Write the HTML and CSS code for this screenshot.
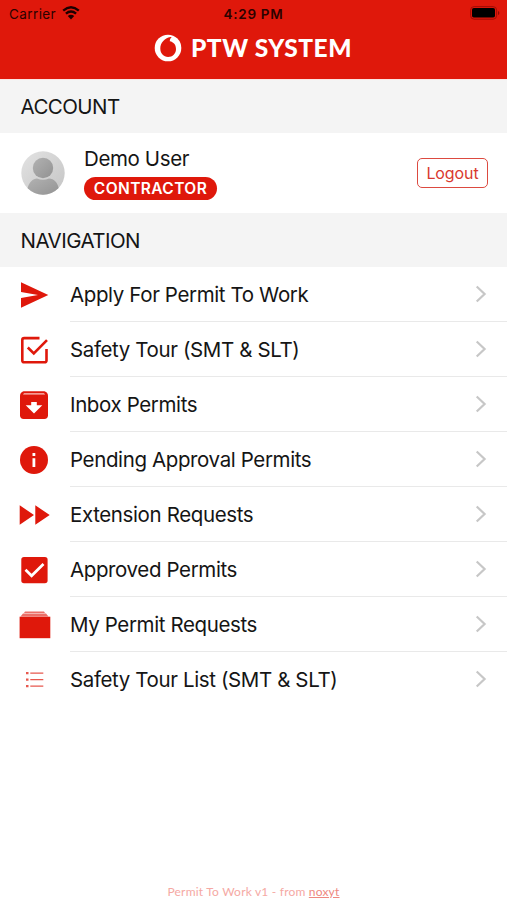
FILE: index.html
```html
<!DOCTYPE html>
<html lang="en">
<head>
<meta charset="utf-8">
<title>PTW System</title>
<link rel="stylesheet" href="styles.css">
</head>
<body>
<header class="header">
  <div class="status">
    <div class="carrier"><span>Carrier</span>
      <svg width="18" height="14" viewBox="0 0 18 14"><path d="M1.200 4.700Q9 -2 16.800 4.700M3.900 7.600Q9 3.400 14.100 7.600" fill="none" stroke="#1c0000" stroke-width="2.400"/><path d="M5.800 10Q9 7.400 12.200 10L9 13.400z" fill="#1c0000"/></svg>
    </div>
    <div class="time">4:29 PM</div>
    <svg class="battery" width="30" height="14" viewBox="0 0 30 14"><rect x=".6" y=".6" width="26" height="12.600" rx="3.500" fill="none" stroke="#a30c05"/><rect x="2" y="2" width="23" height="9.600" rx="1.800" fill="#000"/><path d="M28 5v4q1.400-.7 1.400-2T28 5z" fill="#8d0903"/></svg>
  </div>
  <div class="brand">
    <svg width="28" height="28" viewBox="0 0 28 28"><circle cx="14" cy="14" r="13.300" fill="#fff"/><path d="M16.500 3C10.300 4.200 6.300 9 6.300 14.600c0 4.900 3.300 8.400 7.800 8.400 4.500 0 7.900-3.400 7.900-8 0-4.200-2.400-7-6.200-7.700 0-1.600.5-3.100 1.900-4.200z" fill="#df180b"/></svg>
    <h1>PTW SYSTEM</h1>
  </div>
</header>
<main>
  <h2 class="section account-title"><span>ACCOUNT</span></h2>
  <section class="account">
    <svg class="avatar" width="44" height="44" viewBox="0 0 44 44"><defs><linearGradient id="bg" x2="1" y2="1"><stop stop-color="#e3e3e3"/><stop offset="1" stop-color="#c4c4c4"/></linearGradient><linearGradient id="fg" x2="1" y2="1"><stop stop-color="#b2b2b2"/><stop offset="1" stop-color="#929292"/></linearGradient><clipPath id="c"><circle cx="22" cy="22" r="21.700"/></clipPath></defs><g clip-path="url(#c)"><path fill="url(#bg)" d="M0 0h44v44H0z"/><circle cx="22" cy="17" r="10.200" fill="url(#fg)"/><path d="M6 39C8 31 12 27.500 16 27.500q6 2.400 12 0c5 0 9 4 10 11.500v6H6z" fill="url(#fg)"/></g></svg>
    <div class="user"><span class="name">Demo User</span><span class="badge"><span>CONTRACTOR</span></span></div>
    <button class="logout">Logout</button>
  </section>
  <h2 class="section nav-title"><span>NAVIGATION</span></h2>
  <nav>
    <a class="row"><svg class="icon" viewBox="0 0 34 34"><path d="M4 4.300 31.300 17 4 29.800V20l17-3L4 14z"/></svg><span class="label"><span>Apply For Permit To Work</span><svg class="chev" viewBox="0 0 12 18"><path d="M1.700 1.500 9.600 9l-7.900 7.500"/></svg></span></a>
    <a class="row"><svg class="icon line" viewBox="0 0 34 34"><path d="M22.500 5.100H7.200Q5.300 5.100 5.300 7v20.500q0 1.800 1.900 1.800h20.300q2 0 2-1.800V16"/><path d="m10.800 14.500 6 6L30 7.200"/></svg><span class="label"><span>Safety Tour (SMT &amp; SLT)</span><svg class="chev" viewBox="0 0 12 18"><path d="M1.700 1.500 9.600 9l-7.900 7.500"/></svg></span></a>
    <a class="row"><svg class="icon" viewBox="0 0 34 34"><path d="M6.500 3.300h21Q31 4.500 31 7.900v19.400q0 3.700-3.700 3.700H6.700Q3 31 3 27.300V7.900Q3 4.500 6.500 3.300z"/><path d="M7 5.200h20l1.200 1.200H6z" fill="#fbc9c5"/><path d="M14.200 14h5.600v3.200h5.500L17 25.600l-8.300-8.400h5.500z" fill="#fff"/></svg><span class="label"><span>Inbox Permits</span><svg class="chev" viewBox="0 0 12 18"><path d="M1.700 1.500 9.600 9l-7.900 7.500"/></svg></span></a>
    <a class="row"><svg class="icon" viewBox="0 0 34 34"><circle cx="17" cy="17" r="14"/><path d="M15.500 10h2.800v3h-2.800zm0 5.300h2.800V24h-2.800z" fill="#fff"/></svg><span class="label"><span>Pending Approval Permits</span><svg class="chev" viewBox="0 0 12 18"><path d="M1.700 1.500 9.600 9l-7.900 7.500"/></svg></span></a>
    <a class="row"><svg class="icon" viewBox="0 0 34 34"><path d="M2.700 7.300 17 17 2.700 26.700zm15.600 0L32.700 17l-14.400 9.700z"/></svg><span class="label"><span>Extension Requests</span><svg class="chev" viewBox="0 0 12 18"><path d="M1.700 1.500 9.600 9l-7.900 7.500"/></svg></span></a>
    <a class="row"><svg class="icon" viewBox="0 0 34 34"><rect x="4.300" y="4" width="26.300" height="26.300" rx="2.700"/><path d="m8.500 16.800 6.100 6L26.500 11" fill="none" stroke="#fff" stroke-width="2.700"/></svg><span class="label"><span>Approved Permits</span><svg class="chev" viewBox="0 0 12 18"><path d="M1.700 1.500 9.600 9l-7.900 7.500"/></svg></span></a>
    <a class="row"><svg class="icon" viewBox="0 0 34 34"><path d="M8 3.500h19l1 1.500H7zM6 5.400h23l2.500 3H3.500z" opacity=".62"/><path d="M2.600 8.700h30.700v21.500H2.600z"/></svg><span class="label"><span>My Permit Requests</span><svg class="chev" viewBox="0 0 12 18"><path d="M1.700 1.500 9.600 9l-7.900 7.500"/></svg></span></a>
    <a class="row"><svg class="icon" viewBox="0 0 34 34" opacity=".72"><path d="M13.300 9.500h13v1.300h-13zm0 6.500h13v1.300h-13zm0 6.500h13v1.300h-13zM9 9h2.500v2.300H9zm0 6.500h2.500v2.300H9zm0 6.500h2.500v2.300H9z"/></svg><span class="label"><span>Safety Tour List (SMT &amp; SLT)</span><svg class="chev" viewBox="0 0 12 18"><path d="M1.700 1.500 9.600 9l-7.900 7.500"/></svg></span></a>
  </nav>
</main>
<footer><span>Permit To Work v1 - from <a>noxyt</a></span></footer>
</body>
</html>
```
FILE: styles.css
```css
* { box-sizing: border-box; }
body { margin: 0; height: 900px; display: flex; flex-direction: column; overflow: hidden; background: #fff; color: #151515; font-family: Inter, "Liberation Sans", sans-serif; font-size: 20.500px; letter-spacing: -.38px; }
h1, h2 { margin: 0; }
svg { flex: none; display: block; }
.header { height: 79px; flex: none; background: #df180b; }
.status { height: 28px; display: grid; grid-template-columns: 1fr auto 1fr; align-items: center; padding: 0 7px 0 9px; font-size: 13.500px; color: #2b0200; }
.carrier { display: flex; align-items: center; gap: 6px; letter-spacing: .4px; }
.carrier svg { margin-top: -3px; }
.time { font-weight: 600; font-size: 13.500px; letter-spacing: .7px; margin-right: 2px; }
.battery { justify-self: end; margin-top: -2px; }
.brand { display: flex; align-items: center; gap: 9px; height: 40px; padding-left: 154px; }
.brand h1 { font: 900 24.500px/30px Lato, sans-serif; color: #fff; letter-spacing: .5px; white-space: nowrap; }
.section { display: flex; align-items: center; padding-left: 20.500px; background: #f4f4f4; font-size: 20.500px; font-weight: 400; height: 54px; letter-spacing: -.55px; }
.account-title { border-top: 1px solid #fbe5e3; }
.nav-title { padding-top: 1px; }
.account { height: 80px; display: flex; align-items: center; padding: 0 19px 0 20.500px; }
.user { margin-left: 19.500px; display: flex; flex-direction: column; align-items: flex-start; gap: 6px; flex: 1; }
.name { line-height: 24px; }
.badge { height: 23px; width: 133px; border-radius: 12px; background: #df180b; color: #fff; font-size: 15.500px; font-weight: 600; line-height: 23px; letter-spacing: .4px; text-align: center; }
.avatar { margin-top: -1px; }
.logout { width: 71px; height: 30px; padding: 0; border: 1.500px solid #dc4a40; border-radius: 5px; background: #fff; color: #d9392e; font: 16px Inter, sans-serif; letter-spacing: -.1px; }
.row { height: 55px; display: flex; align-items: center; padding-left: 17px; }
.icon { width: 34px; height: 34px; fill: #df180b; }
.line { fill: none; stroke: #df180b; stroke-width: 2.600; }
.label { flex: 1; height: 55px; margin-left: 19px; padding: 1px 20px 0 0; display: flex; align-items: center; justify-content: space-between; border-bottom: 1px solid #e9e9e9; white-space: nowrap; }
.row:last-child .label { border-bottom-color: transparent; }
.chev { width: 12px; height: 18px; margin-top: -1px; fill: none; stroke: #c7c7c7; stroke-width: 2.200; }
footer { margin-top: auto; height: 17px; display: flex; justify-content: center; font: 12px/17px Lato, sans-serif; color: #f5a9a4; letter-spacing: .2px; }
footer a { text-decoration: underline; color: #ee8880; }
```
